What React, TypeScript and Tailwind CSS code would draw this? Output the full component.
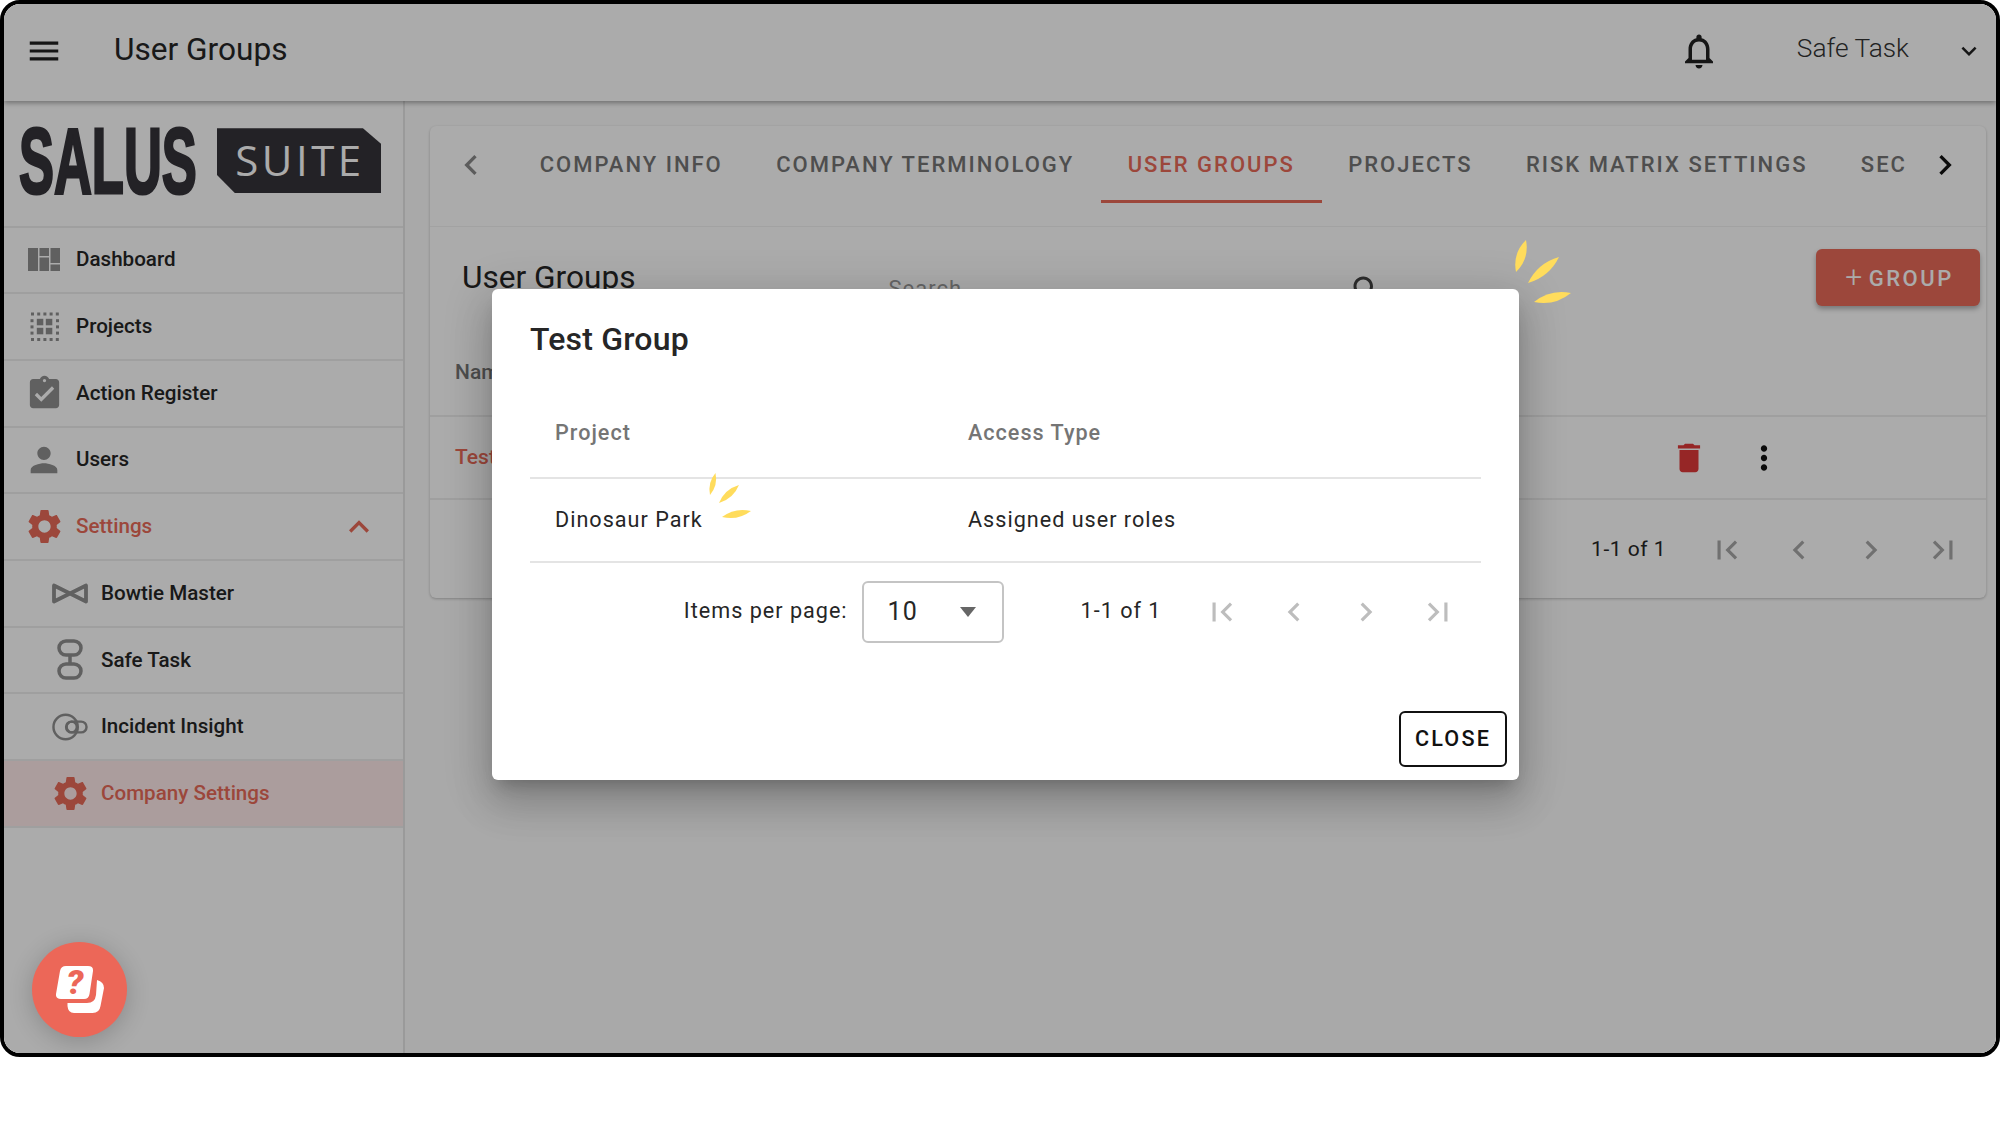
import React from "react";

const P = {
  menu: "M3 18h18v-2H3v2zm0-5h18v-2H3v2zm0-7v2h18V6H3z",
  bell: "M12 22c1.1 0 2-.9 2-2h-4c0 1.1.89 2 2 2zm6-6v-5c0-3.07-1.64-5.64-4.5-6.32V4c0-.83-.67-1.5-1.5-1.5s-1.5.67-1.5 1.5v.68C7.63 5.36 6 7.92 6 11v5l-2 2v1h16v-1l-2-2zm-2 1H8v-6c0-2.48 1.51-4.5 4-4.5s4 2.02 4 4.5v6z",
  gear: "M19.14 12.94c.04-.3.06-.61.06-.94 0-.32-.02-.64-.07-.94l2.03-1.58c.18-.14.23-.41.12-.61l-1.92-3.32c-.12-.22-.37-.29-.59-.22l-2.39.96c-.5-.38-1.03-.7-1.62-.94l-.36-2.54c-.04-.24-.24-.41-.48-.41h-3.84c-.24 0-.43.17-.47.41l-.36 2.54c-.59.24-1.13.57-1.62.94l-2.39-.96c-.22-.08-.47 0-.59.22L2.74 8.87c-.12.21-.08.47.12.61l2.03 1.58c-.05.3-.09.63-.09.94s.02.64.07.94l-2.03 1.58c-.18.14-.23.41-.12.61l1.92 3.32c.12.22.37.29.59.22l2.39-.96c.5.38 1.03.7 1.62.94l.36 2.54c.05.24.24.41.48.41h3.84c.24 0 .44-.17.47-.41l.36-2.54c.59-.24 1.13-.56 1.62-.94l2.39.96c.22.08.47 0 .59-.22l1.92-3.32c.12-.22.07-.47-.12-.61l-2.01-1.58zM12 15.6c-1.98 0-3.6-1.62-3.6-3.6s1.62-3.6 3.6-3.6 3.6 1.62 3.6 3.6-1.62 3.6-3.6 3.6z",
  person: "M12 12c2.21 0 4-1.79 4-4s-1.79-4-4-4-4 1.79-4 4 1.79 4 4 4zm0 2c-2.67 0-8 1.34-8 4v2h16v-2c0-2.66-5.33-4-8-4z",
  assign: "M19 3h-4.18C14.4 1.84 13.3 1 12 1c-1.3 0-2.4.84-2.82 2H5c-1.1 0-2 .9-2 2v14c0 1.1.9 2 2 2h14c1.1 0 2-.9 2-2V5c0-1.1-.9-2-2-2zm-7 0c.55 0 1 .45 1 1s-.45 1-1 1-1-.45-1-1 .45-1 1-1zm-2 14l-4-4 1.41-1.41L10 14.17l6.59-6.59L18 9l-8 8z",
  del: "M6 19c0 1.1.9 2 2 2h8c1.1 0 2-.9 2-2V7H6v12zM19 4h-3.5l-1-1h-5l-1 1H5v2h14V4z",
  more: "M12 8c1.1 0 2-.9 2-2s-.9-2-2-2-2 .9-2 2 .9 2 2 2zm0 2c-1.1 0-2 .9-2 2s.9 2 2 2 2-.9 2-2-.9-2-2-2zm0 6c-1.1 0-2 .9-2 2s.9 2 2 2 2-.9 2-2-.9-2-2-2z",
  first: "M18.41 16.59L13.82 12l4.59-4.59L17 6l-6 6 6 6zM6 6h2v12H6z",
  last: "M5.59 7.41L10.18 12l-4.59 4.59L7 18l6-6-6-6zM16 6h2v12h-2z",
  left: "M15.41 7.41L14 6l-6 6 6 6 1.41-1.41L10.83 12z",
  right: "M10 6L8.59 7.41 13.17 12l-4.58 4.59L10 18l6-6z",
  up: "M12 8l-6 6 1.41 1.41L12 10.83l4.59 4.58L18 14z",
  down: "M16.59 8.59L12 13.17 7.41 8.59 6 10l6 6 6-6z",
  search: "M15.5 14h-.79l-.28-.27C15.41 12.59 16 11.11 16 9.5 16 5.91 13.09 3 9.5 3S3 5.91 3 9.5 5.91 16 9.5 16c1.61 0 3.09-.59 4.23-1.57l.27.28v.79l5 4.99L20.49 19l-4.99-5zm-6 0C7.01 14 5 11.99 5 9.5S7.01 5 9.5 5 14 7.01 14 9.5 11.99 14 9.5 14z",
};

function I({ d, className }: { d: string; className: string }) {
  return (
    <svg viewBox="0 0 24 24" className={className} fill="currentColor">
      <path d={d} />
    </svg>
  );
}

function DashIcon() {
  return (
    <svg viewBox="0 0 32 23" className="w-[32px] h-[23px]" fill="currentColor">
      <rect x="0" y="0" width="10" height="23" />
      <rect x="11.5" y="0" width="9.5" height="8" />
      <rect x="11.5" y="9.500" width="9.500" height="13.500" />
      <rect x="22.500" y="0" width="9.500" height="15" />
      <rect x="22.500" y="16.500" width="9.500" height="6.500" />
    </svg>
  );
}

function ProjectsIcon() {
  const outer: number[][] = [];
  for (let i = 0; i < 5; i++) {
    const p = 1 + i * 6.2;
    outer.push([p, 0.5], [p, 26]);
    if (i > 0 && i < 4) outer.push([0.5, p], [26, p]);
  }
  return (
    <svg viewBox="0 0 29 29" className="w-[29px] h-[29px]" fill="currentColor">
      {outer.map(([x, y], i) => (
        <rect key={i} x={x} y={y} width="3" height="3" />
      ))}
      {[6.8, 15.8].map((x) =>
        [6.8, 15.8].map((y) => <rect key={x + "-" + y} x={x} y={y} width="6.5" height="6.5" />)
      )}
    </svg>
  );
}

function BowIcon() {
  return (
    <svg viewBox="0 0 36 21" className="w-[36px] h-[21px]" fill="none" stroke="currentColor" strokeWidth="3.8">
      <path d="M2 2.500v16L18 10.500 34 2.500v16L18 10.500z" strokeLinejoin="round" />
    </svg>
  );
}

function SafeIcon() {
  return (
    <svg viewBox="0 0 26 41" className="w-[26px] h-[41px]" fill="none" stroke="currentColor" strokeWidth="3.5">
      <rect x="2" y="2" width="22" height="14" rx="7" />
      <rect x="2" y="25" width="22" height="14" rx="7" />
      <path d="M13 16v9" />
    </svg>
  );
}

function IncidentIcon() {
  return (
    <svg viewBox="0 0 37 28" className="w-[37px] h-[28px]" fill="none" stroke="currentColor" strokeWidth="2.5">
      <circle cx="14" cy="14" r="12.500" />
      <circle cx="20" cy="14" r="5.500" />
      <rect x="15" y="8.500" width="20.500" height="11" rx="5.500" />
    </svg>
  );
}

function Nav({
  icon,
  label,
  sub,
  active,
  red,
  chevron,
}: {
  icon: React.ReactNode;
  label: string;
  sub?: boolean;
  active?: boolean;
  red?: boolean;
  chevron?: boolean;
}) {
  return (
    <div
      className={`h-[66.7px] flex items-center border-b-2 border-[#ededed] text-[20.6px] font-medium ${
        sub ? "pl-[48px]" : "pl-[24px]"
      } ${active ? "bg-[#ffeaea]" : ""} ${red ? "text-[#e96a58]" : "text-[#262626]"}`}
    >
      <div
        className={`flex items-center justify-center shrink-0 ${
          sub ? "w-[36px] mr-[13px]" : "w-[32px] mr-[16px]"
        } ${red ? "text-[#e96a58]" : "text-[#8f8f8f]"}`}
      >
        {icon}
      </div>
      <span>{label}</span>
      {chevron && <I d={P.up} className="w-[40px] h-[40px] ml-auto mr-[24px] text-[#e96a58]" />}
    </div>
  );
}

function Pager({ className }: { className: string }) {
  return (
    <div className={`flex ${className}`}>
      {[P.first, P.left, P.right, P.last].map((d) => (
        <div key={d} className="w-[72px] flex justify-center">
          <I d={d} className="w-[38px] h-[38px]" />
        </div>
      ))}
    </div>
  );
}

// one tapered highlighter stroke, from two end points
function lens(x1: number, y1: number, x2: number, y2: number, w: number) {
  const mx = (x1 + x2) / 2;
  const my = (y1 + y2) / 2;
  const dx = x2 - x1;
  const dy = y2 - y1;
  const len = Math.hypot(dx, dy);
  const nx = (-dy / len) * w;
  const ny = (dx / len) * w;
  return `M${x1} ${y1}Q${mx + nx} ${my + ny} ${x2} ${y2}Q${mx - nx} ${my - ny} ${x1} ${y1}Z`;
}

const tabs = ["COMPANY INFO", "COMPANY TERMINOLOGY", "USER GROUPS", "PROJECTS", "RISK MATRIX SETTINGS", "SEC"];

export default function App() {
  return (
    <div className="w-[2000px] h-[1125px] bg-white font-['Roboto',sans-serif] overflow-hidden">
      <div className="relative w-[2000px] h-[1057px] border-4 border-black rounded-[20px] overflow-hidden flex flex-col bg-white">
        <header className="h-[97px] shrink-0 flex items-center bg-white shadow-[0_2px_5px_rgba(0,0,0,0.35)] z-10 text-[#262626] pb-[4px]">
          <I d={P.menu} className="w-[38px] h-[38px] ml-[21px] text-[#222]" />
          <h1 className="ml-[51px] text-[31.6px] font-normal leading-none -mt-[1px]">User Groups</h1>
          <I d={P.bell} className="w-[42px] h-[42px] ml-auto text-[#222]" />
          <span className="ml-[77px] text-[26.3px] font-light leading-none -mt-[4px] text-[#333]">Safe Task</span>
          <I d={P.down} className="w-[30px] h-[30px] ml-[45px] mr-[12px] text-[#222]" />
        </header>

        <div className="flex-1 flex min-h-0">
          <aside className="w-[401px] shrink-0 border-r-2 border-[#e6e6e6] bg-white">
            <div className="h-[126.5px] border-b-2 border-[#ededed] flex items-center pl-[15px] pb-[5px] relative overflow-hidden">
              <div className="w-[177px] h-[70px] flex items-center justify-start overflow-visible">
                <span className="font-['Liberation_Sans',sans-serif] font-bold text-[92px] leading-none text-[#353339] origin-left scale-x-[0.57] [-webkit-text-stroke:3px_#353339]">
                  SALUS
                </span>
              </div>
              <div className="ml-[21px] w-[164px] h-[65px] bg-[#353339] flex items-center justify-center [clip-path:polygon(0_0,89%_0,100%_24%,100%_100%,11%_100%,0_72%)]">
                <span className="font-['Open_Sans',sans-serif] text-[42px] leading-none text-white tracking-[3.5px] -mt-[1px] ml-[2px]">SUITE</span>
              </div>
            </div>
            <Nav icon={<DashIcon />} label="Dashboard" />
            <Nav icon={<ProjectsIcon />} label="Projects" />
            <Nav icon={<I d={P.assign} className="w-[39px] h-[39px] shrink-0" />} label="Action Register" />
            <Nav icon={<I d={P.person} className="w-[40px] h-[40px] shrink-0" />} label="Users" />
            <Nav icon={<I d={P.gear} className="w-[41px] h-[41px] shrink-0" />} label="Settings" red chevron />
            <Nav icon={<BowIcon />} label="Bowtie Master" sub />
            <Nav icon={<SafeIcon />} label="Safe Task" sub />
            <Nav icon={<IncidentIcon />} label="Incident Insight" sub />
            <Nav icon={<I d={P.gear} className="w-[41px] h-[41px] shrink-0" />} label="Company Settings" sub active red />
          </aside>

          <main className="flex-1 min-w-0 bg-[#fdfdfd] pl-[25px] pr-[10px] pt-[25px]">
            <div className="bg-white rounded-[6px] shadow-[0_1px_3px_rgba(0,0,0,0.25)]">
              <div className="h-[101px] flex items-start border-b border-[#f2f2f2]">
                <div className="w-[82px] flex justify-center text-[#8a8a8a] shrink-0 mt-[19px]">
                  <I d={P.left} className="w-[40px] h-[40px]" />
                </div>
                <div className="w-[1395px] pl-[1px] h-full flex overflow-hidden shrink-0">
                  {tabs.map((t) => {
                    const on = t === "USER GROUPS";
                    return (
                      <div
                        key={t}
                        className={`h-[77px] px-[26.7px] pt-[4px] flex items-center shrink-0 whitespace-nowrap text-[22px] font-medium tracking-[2px] leading-none border-b-[3px] self-start ${
                          on ? "text-[#e96a58] border-[#e96a58]" : "text-[#757575] border-transparent"
                        }`}
                      >
                        {t}
                      </div>
                    );
                  })}
                </div>
                <div className="flex-1 flex justify-center text-[#111] pr-[4px] mt-[19px]">
                  <I d={P.right} className="w-[40px] h-[40px]" />
                </div>
              </div>

              <div className="h-[113px] flex items-start relative">
                <h2 className="ml-[32px] mt-[32px] text-[31.6px] font-normal leading-[38px] text-[#262626]">User Groups</h2>
                <div className="ml-[253px] mt-[51px] w-[492px] text-[22px] text-[#999] leading-none tracking-[1px]">Search</div>
                <I d={P.search} className="w-[36px] h-[36px] -ml-[32px] mt-[45px] text-[#444]" />
                <div className="ml-auto mr-[6px] mt-[22px] w-[164px] h-[57px] pt-[1px] pl-[3px] rounded-[6px] bg-[#e96a58] flex items-center justify-center text-white text-[22px] font-medium tracking-[2.5px] shadow-[0_3px_5px_rgba(0,0,0,0.3)]">
                  <span className="font-light text-[30px] leading-none mr-[4px] -mt-[3px]">+</span>GROUP
                </div>
              </div>

              <div className="h-[77px] border-b-2 border-[#ededed] flex items-center pl-[25px] text-[21px] font-medium text-[#757575] pb-[10px]">
                Name
              </div>
              <div className="h-[83px] border-b-2 border-[#ededed] flex items-center pl-[25px] text-[21px] font-medium text-[#e96a58] relative">
                Test Group
                <I d={P.del} className="w-[38px] h-[38px] ml-auto text-[#e03a3a]" />
                <I d={P.more} className="w-[38px] h-[38px] ml-[37px] mr-[203px] text-[#111]" />
              </div>
              <div className="h-[98px] pt-[1px] flex items-center justify-end pr-[7px]">
                <span className="text-[21px] tracking-[0.5px] text-[#262626] translate-x-[2px]">1-1 of 1</span>
                <Pager className="ml-[27px] text-[#a8a8a8]" />
              </div>
            </div>
          </main>
        </div>

        <div className="absolute inset-0 bg-black/[0.33] z-20" />

        <div className="absolute left-[488px] top-[285px] w-[1027px] h-[491px] bg-white rounded-[6px] z-30 flex flex-col shadow-[0_11px_15px_-7px_rgba(0,0,0,0.2),0_24px_38px_3px_rgba(0,0,0,0.14),0_9px_46px_8px_rgba(0,0,0,0.12)]">
          <div className="h-[101px] shrink-0 flex items-center pl-[38px] pb-[2px] text-[32px] font-medium tracking-[0.2px] leading-none text-[#262626]">
            Test Group
          </div>
          <div className="mx-[38px] flex flex-col">
            <div className="h-[89px] grid grid-cols-[413px_1fr] items-center pl-[25px] border-b-2 border-[#e4e4e4] text-[21.6px] font-medium tracking-[1px] text-[#757575]">
              <span>Project</span>
              <span>Access Type</span>
            </div>
            <div className="h-[84px] grid grid-cols-[413px_1fr] items-center pl-[25px] border-b-2 border-[#e4e4e4] text-[21.6px] tracking-[1px] font-normal text-[#262626]">
              <span>Dinosaur Park</span>
              <span>Assigned user roles</span>
            </div>
            <div className="h-[99px] pb-[2px] flex items-center justify-end pr-[7px] text-[21.6px] tracking-[1px] text-[#262626]">
              <span>Items per page:</span>
              <div className="ml-[14px] w-[142px] h-[62px] border-2 border-[#c4c4c4] rounded-[6px] flex items-center pl-[24px]">
                <span className="text-[25px] tracking-[1px]">10</span>
                <svg viewBox="0 0 16 10" className="w-[16px] h-[10px] ml-[42px] text-[#666]" fill="currentColor">
                  <path d="M0 0h16L8 10z" />
                </svg>
              </div>
              <span className="ml-[77px]">1-1 of 1</span>
              <Pager className="ml-[24.5px] text-[#bdbdbd]" />
            </div>
          </div>
          <div className="mt-auto flex justify-end pr-[12px] pb-[13px]">
            <div className="w-[108px] h-[56px] pt-[1px] border-2 border-[#111] rounded-[6px] flex items-center justify-center text-[21.6px] font-medium tracking-[2.2px] text-[#111]">
              CLOSE
            </div>
          </div>
        </div>

        <svg viewBox="0 0 80 80" className="absolute left-[1494px] top-[226px] w-[80px] h-[80px] z-40" fill="#ffdc5c">
          <path d={lens(28, 10, 18, 42, 9)} />
          <path d={lens(61, 27, 30, 53, 9)} />
          <path d={lens(36, 72, 73, 63, 9)} />
        </svg>
        <svg viewBox="0 0 60 60" className="absolute left-[700px] top-[464px] w-[60px] h-[60px] z-40" fill="#ffdc5c">
          <path d={lens(11.5, 5, 6, 27, 5.5)} />
          <path d={lens(35, 17, 15, 35, 6.5)} />
          <path d={lens(18, 49, 47, 43, 7)} />
        </svg>

        <div className="absolute left-[28px] top-[938px] w-[95px] h-[95px] rounded-full bg-[#ec6758] z-40 shadow-[0_4px_24px_rgba(0,0,0,0.2)] flex items-center justify-center">
          <svg viewBox="0 0 48 48" className="w-[48px] h-[48px]" fill="white">
            <path d="M10 0H32q5.500 0 5 5L33.500 28q-.7 5-5.500 5H5q-5.500 0-5-5L4 5q1-5 6-5z" />
            <path d="M41 14q7 2 7 8L44.500 40q-1 7-8 7H18q-6 0-6.500-7V37H31q8 0 9-8z" />
          </svg>
          <span className="absolute left-[28px] top-[23px] w-[30px] h-[34px] flex items-center justify-center text-[34px] leading-none font-black italic text-[#ec6758]">?</span>
        </div>
      </div>
    </div>
  );
}
